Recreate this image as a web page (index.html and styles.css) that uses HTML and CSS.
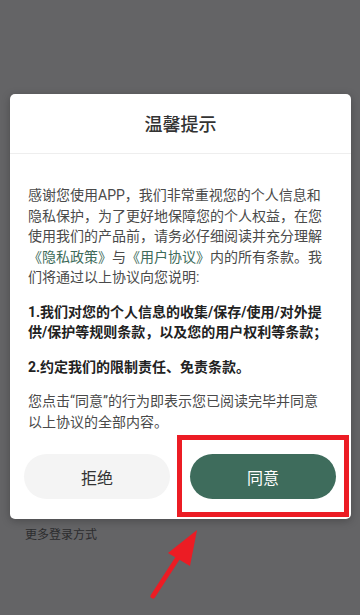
FILE: index.html
```
<!DOCTYPE html>
<html lang="zh-CN">
<head>
    <meta charset="UTF-8">
    <meta name="viewport" content="width=device-width, initial-scale=1.0">
    <title>温馨提示</title>
    <link rel="stylesheet" href="styles.css">
</head>
<body>
    <div class="screen">
        <div class="under">
            <a class="more-login">更多登录方式</a>
        </div>

        <div class="mask">
            <div class="dialog">
                <header class="dialog-title">温馨提示</header>
                <div class="dialog-body">
                    <p>感谢您使用APP，我们非常重视您的个人信息和隐私保护，为了更好地保障您的个人权益，在您使用我们的产品前，请务必仔细阅读并充分理解<a class="link">《隐私政策》</a>与<a class="link">《用户协议》</a>内的所有条款。我们将通过以上协议向您说明:</p>
                    <p class="strong">1.我们对您的个人信息的收集/保存/使用/对外提供/保护等规则条款，以及您的用户权利等条款；</p>
                    <p class="strong">2.约定我们的限制责任、免责条款。</p>
                    <p>您点击“同意”的行为即表示您已阅读完毕并同意以上协议的全部内容。</p>
                </div>
                <footer class="dialog-btns">
                    <button class="btn btn-refuse">拒绝</button>
                    <button class="btn btn-agree">同意</button>
                </footer>
            </div>
        </div>

        <!-- annotation on top of the screenshot -->
        <div class="mark-box"></div>
        <svg class="mark-arrow" width="60" height="80" viewBox="0 0 60 80">
            <line x1="12" y1="76" x2="38" y2="36" stroke="#ec1c24" stroke-width="5" stroke-linecap="round"/>
            <polygon points="56,10 27,33 49,46" fill="#ec1c24"/>
        </svg>
    </div>
</body>
</html>
```

FILE: styles.css
```
html, body {
    margin: 0;
    padding: 0;
}

body {
    font-family: Roboto, "Noto Sans CJK SC", sans-serif;
    background-color: #646466;
}

.screen {
    position: relative;
    width: 360px;
    height: 615px;
    overflow: hidden;
    background-color: #646466;
}

.under {
    padding: 524px 0 0 25px;
}

.more-login {
    font-size: 12px;
    line-height: 16px;
    color: #2c2c2e;
}

.mask {
    position: absolute;
    top: 0;
    left: 0;
    right: 0;
    bottom: 0;
    padding: 94px 9px 0 10px;
}

.dialog {
    background-color: #fff;
    border-radius: 5px;
    box-shadow: 0 2px 8px rgba(0, 0, 0, 0.25);
}

.dialog-title {
    padding: 21px 0 18px;
    font-size: 18px;
    font-weight: 500;
    line-height: 20px;
    text-align: center;
    color: #333;
    border-bottom: 1px solid #eeeeee;
}

.dialog-body {
    padding: 31px 22px 0 18px;
    font-size: 14px;
    line-height: 20.5px;
    color: #4a4a4a;
    text-spacing-trim: space-all;
}

.dialog-body p {
    margin: 0 0 14px;
}

.dialog-body p:last-child {
    margin-bottom: 0;
}

.dialog-body .strong {
    font-weight: bold;
    color: #222;
}

.link {
    color: #3d6b5a;
}

.dialog-btns {
    display: flex;
    gap: 20px;
    padding: 22px 15px 20px 14px;
}

.btn {
    flex: 1;
    height: 45px;
    border: none;
    border-radius: 23px;
    font-family: inherit;
    font-size: 16px;
    cursor: pointer;
}

.btn-refuse {
    background-color: #f4f4f4;
    color: #333;
}

.btn-agree {
    background-color: #3e6c5c;
    color: #fff;
}

.mark-box {
    position: absolute;
    left: 177px;
    top: 435px;
    width: 162px;
    height: 72px;
    border: 5px solid #ec1c24;
}

.mark-arrow {
    position: absolute;
    left: 141px;
    top: 520px;
}
```
